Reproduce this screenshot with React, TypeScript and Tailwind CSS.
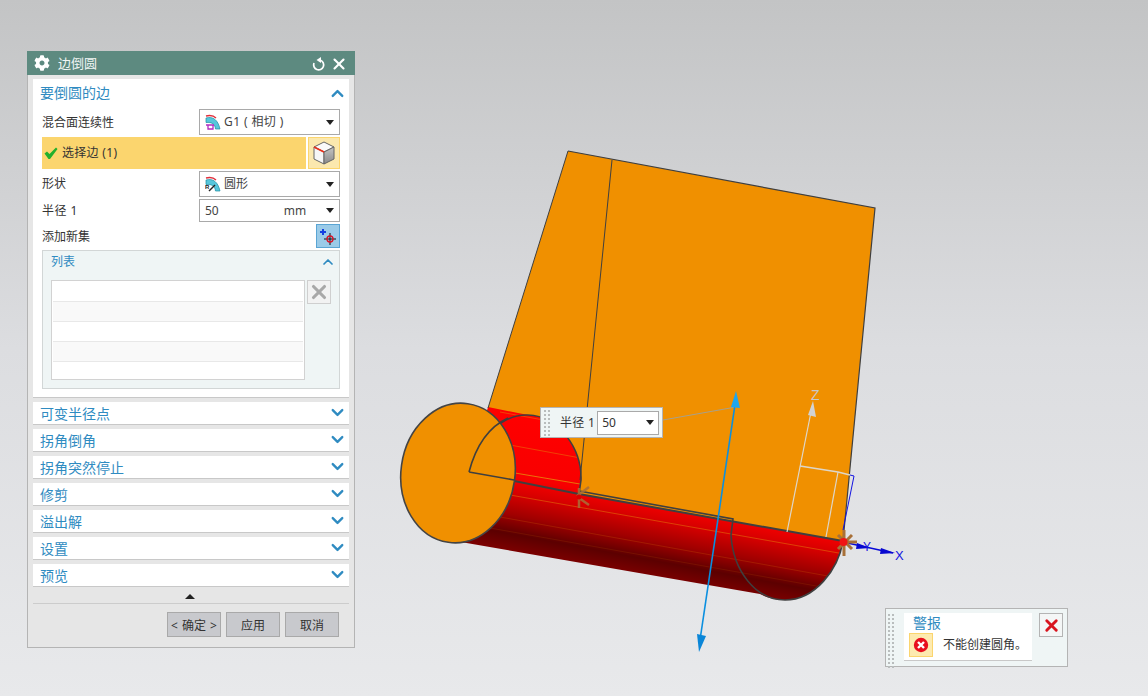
import { ChevronDown, ChevronUp, X } from "lucide-react";
import { FaCog } from "react-icons/fa";

const collapsed = ["可变半径点", "拐角倒角", "拐角突然停止", "修剪", "溢出解", "设置", "预览"];

const Grip = () => (
  <div className="grid grid-cols-2 gap-x-[2px] gap-y-[2px] w-[6px]">
    {Array.from({ length: 14 }).map((_, i) => (
      <div key={i} className="w-[2px] h-[2px] bg-[#b9bdbd]" />
    ))}
  </div>
);

const Caret = () => (
  <div className="w-0 h-0 border-l-[4px] border-r-[4px] border-t-[5px] border-l-transparent border-r-transparent border-t-[#222]" />
);

const BlendIcon = ({ round }: { round?: boolean }) => (
  <svg width="16" height="16" viewBox="0 0 16 16" className="shrink-0">
    <path d="M1 4 C8 2 13 6 15 15 L10.5 15 C10 10 7 8 1 8.5 Z" fill="#56c6dc" stroke="#1c8ca0" strokeWidth="0.7" />
    <path d="M1 2 C5 1 9 2 11 4" fill="none" stroke="#e0303c" strokeWidth="1.4" />
    {round ? (
      <>
        <text x="0" y="13" fontSize="6" fontWeight="700" fill="#222" fontFamily="Liberation Sans">R</text>
        <path d="M4 15 L10 9" stroke="#222" strokeWidth="1.4" />
      </>
    ) : (
      <path d="M1 11 H9 M3 11 V15 H8 V11" fill="none" stroke="#b02cc0" strokeWidth="1.3" />
    )}
  </svg>
);

const Select = ({ children, h }: { children: React.ReactNode; h: string }) => (
  <div className={`w-[141px] ${h} border border-[#a9a9a9] bg-white flex items-center pl-[5px] pr-[5px] text-[#333]`}>
    {children}
    <div className="ml-auto">
      <Caret />
    </div>
  </div>
);

const Model = () => (
  <svg width="1148" height="696" viewBox="0 0 1148 696" className="absolute left-0 top-0">
    <defs>
      <linearGradient id="cyl" gradientUnits="userSpaceOnUse" x1="488" y1="407" x2="463" y2="542">
        <stop offset="0" stopColor="#ff0000" />
        <stop offset="0.46" stopColor="#f80000" />
        <stop offset="0.58" stopColor="#d80000" />
        <stop offset="0.74" stopColor="#a00000" />
        <stop offset="0.88" stopColor="#5c0000" />
        <stop offset="1" stopColor="#7c0000" />
      </linearGradient>
      <clipPath id="cylClip">
        <path d="M488,407 L528,415 C560,416 582,450 581,480 L579,494 L843,541 C838,570 815,600 785,600 C775,600 768,598 760,594 L455,541 Z" />
      </clipPath>
    </defs>

    <polygon points="568,151 875,208 843,541 579,494 469,472 488,408" fill="#f09000" />
    <path d="M488,407 L528,415 C560,416 582,450 581,480 L579,494 L843,541 C838,570 815,600 785,600 C775,600 768,598 760,594 L455,541 Z" fill="url(#cyl)" />
    <g clipPath="url(#cylClip)" stroke="#e8800a" strokeOpacity="0.5" strokeWidth="1" fill="none">
      <path d="M500,412 L700,449" />
      <path d="M510,445 L700,480" />
      <path d="M515,473 L580,484" strokeOpacity="0.9" />
      <path d="M510,495 L850,555" />
      <path d="M500,517 L850,580" strokeOpacity="0.2" />
      <path d="M490,528 L850,592" strokeOpacity="0.12" />
    </g>

    <g fill="none" stroke="#3f3f3f">
      <path d="M568,151 L875,208 L843,541" strokeWidth="1.2" />
      <path d="M568,151 L488,408" strokeWidth="1" />
      <path d="M612,160 L580,480" strokeWidth="1" />
      <path d="M469,472 C478,438 502,414 528,415 C560,416 582,450 581,480 L579,494" strokeWidth="1.6" />
      <path d="M579,491 L733,519 L731,535 C733,570 755,600 785,600 C815,600 838,570 843,541" strokeWidth="1.6" />
      <path d="M469,472 L579,494 L843,541" strokeWidth="2" />
    </g>
    <ellipse cx="458" cy="473" rx="57" ry="70" transform="rotate(8 458 473)" fill="#f09000" stroke="#444" strokeWidth="1.6" />
    <path d="M469,472 C478,438 495,424 508,418 M469,472 L514,480" fill="none" stroke="#3f3f3f" strokeWidth="1.6" />

    {/* guide line and blue direction arrow */}
    <path d="M663,420 L736,407" stroke="#a8a08a" strokeWidth="1" />
    <path d="M736,398 L700,640" stroke="#0a8fe0" strokeWidth="1.6" />
    <polygon points="736,391 740,408 731,407" fill="#1ea6ee" />
    <polygon points="699,652 697,634 706,636" fill="#0a86d8" />

    {/* csys */}
    <g fill="none" stroke="#ddd6c8" strokeWidth="1.2">
      <path d="M787,532 L811,412" />
      <path d="M800,466 L838,472 L850,475" strokeWidth="1.6" />
      <path d="M838,472 L826,537" />
    </g>
    <polygon points="813,401 816,417 808,415" fill="#d2d2d2" />
    <text x="811" y="400" fontSize="14" fill="#c8c8c8" fontFamily="Liberation Sans">Z</text>
    <path d="M850,475 L854,476 L843,530" fill="none" stroke="#1414e0" strokeWidth="1" />
    <path d="M843,542 L893,553" stroke="#0808d8" strokeWidth="1.4" />
    <polygon points="895,553 880,554 881,548" fill="#0808d0" />
    <polygon points="870,548 856,549 857,543" fill="#0808d0" />
    <text x="863" y="551" fontSize="12" fill="#1414e0" fontFamily="Liberation Sans">Y</text>
    <text x="895" y="560" fontSize="13" fill="#1414e0" fontFamily="Liberation Sans">X</text>
    <g stroke="#a87038" strokeWidth="3">
      <path d="M844,530 V556 M838,535 L852,549 M838,549 L852,535 M844,542 H857" />
    </g>
    <circle cx="843.5" cy="542" r="4" fill="#f01414" />
    <g stroke="#a87038" strokeOpacity="0.85" strokeWidth="2.5">
      <path d="M579,488 V508 M577,496 L589,487 M579,498 L589,505" />
    </g>
    <circle cx="579" cy="497" r="2.5" fill="#d80000" />
  </svg>
);

export default function App() {
  return (
    <div className="relative w-[1148px] h-[696px] overflow-hidden bg-gradient-to-b from-[#c3c4c5] via-[#dcdde0] via-50% to-[#e8e9eb] font-['Noto_Sans','Noto_Sans_CJK_SC',sans-serif] text-[13px] leading-none">
      <Model />

      {/* feature dialog */}
      <div className="absolute left-[27px] top-[51px] w-[328px] bg-[#e6e6e6] border-x border-b border-[#b4b4b4] flex flex-col">
        <div className="-mx-px h-[24px] bg-[#5d8a80] text-white flex items-center pl-[7px] pr-[7px]">
          <FaCog size={16} className="shrink-0" />
          <span className="ml-[8px] text-[#f0f5f4]">边倒圆</span>
          <svg width="16" height="16" viewBox="0 0 16 16" className="ml-auto mr-[3px] mt-[2px]">
            <path d="M3 7 A5 5 0 1 0 9.5 4.2" fill="none" stroke="#fff" strokeWidth="1.7" />
            <polygon points="10,1 10,7 5.5,4" fill="#fff" />
          </svg>
          <X size={18} strokeWidth={2.8} className="mt-px shrink-0" />
        </div>

        <div className="px-[5px] pt-[4px] flex flex-col gap-[4px]">
          <div className="bg-white border-b border-[#c8c8c8] px-[9px] pb-[8px] flex flex-col gap-[2px]">
            <div className="h-[28px] flex items-center justify-between -ml-[2px] text-[#2f8bc1] text-[14px]">
              <span>要倒圆的边</span>
              <ChevronUp size={19} strokeWidth={3} className="text-[#2f8bc1] -mr-[7px]" />
            </div>

            <div className="flex items-center justify-between text-[12px] text-[#333]">
              <span className="mt-[2px]">混合面连续性</span>
              <Select h="h-[26px]">
                <BlendIcon />
                <span className="ml-[3px] text-[#444] tracking-[0.4px]">G1 ( 相切 )</span>
              </Select>
            </div>

            <div className="flex gap-[2px] h-[32px]">
              <div className="flex-1 bg-[#fbd56e] flex items-center pl-[2px] text-[12px] text-[#333]">
                <svg width="14" height="14" viewBox="0 0 14 14">
                  <path d="M0.5 7.5 L3 5.5 L5.5 8 L12 1.5 L13.5 3 L6 13 L4.5 13 Z" fill="#22b02c" />
                </svg>
                <span className="ml-[4px] tracking-[0.3px]">选择边 (1)</span>
              </div>
              <div className="w-[32px] bg-[#fbe8ae] border border-[#fbd56e] flex items-center justify-center">
                <svg width="22" height="24" viewBox="0 0 22 24">
                  <defs>
                    <linearGradient id="cubeSide" x1="0" y1="0" x2="0" y2="1">
                      <stop offset="0" stopColor="#c4c4c4" />
                      <stop offset="1" stopColor="#8a8a8a" />
                    </linearGradient>
                  </defs>
                  <polygon points="1,6 11,1 21,6 11,11" fill="#fafafa" stroke="#666" strokeWidth="1" />
                  <polygon points="1,6 11,11 11,23 1,18" fill="#f6f6f6" stroke="#666" strokeWidth="1" />
                  <polygon points="21,6 11,11 11,23 21,18" fill="url(#cubeSide)" stroke="#666" strokeWidth="1" />
                  <path d="M1,6 L11,11" fill="none" stroke="#e8301c" strokeWidth="1.6" />
                </svg>
              </div>
            </div>

            <div className="flex items-center justify-between text-[12px] text-[#333]">
              <span>形状</span>
              <Select h="h-[26px]">
                <BlendIcon round />
                <span className="ml-[3px] text-[#444]">圆形</span>
              </Select>
            </div>

            <div className="flex items-center justify-between text-[12px] text-[#333]">
              <span className="tracking-[0.5px]">半径 1</span>
              <Select h="h-[23px]">
                <span className="text-[#444]">50</span>
                <span className="ml-[65px] text-[#444]">mm</span>
              </Select>
            </div>

            <div className="flex items-center justify-between h-[24px] text-[12px] text-[#333]">
              <span className="mt-[2px]">添加新集</span>
              <div className="w-[24px] h-[24px] bg-[#9bcbe8] border border-[#5aa5d4] flex items-center justify-center">
                <svg width="18" height="18" viewBox="0 0 18 18">
                  <path d="M1 5 H7 M4 2 V8" stroke="#1440e0" strokeWidth="2" />
                  <path d="M5 12 H17 M11 6 V18" stroke="#111" strokeWidth="1" />
                  <circle cx="11" cy="12" r="3" fill="none" stroke="#d81428" strokeWidth="1.4" />
                </svg>
              </div>
            </div>

            <div className="h-[139px] bg-[#eff5f5] border border-[#d2d6d6] flex flex-col pl-[8px]">
              <div className="h-[29px] flex items-center justify-between pr-[2px] text-[#2f8bc1] text-[12px]">
                <span className="mb-[8px]">列表</span>
                <ChevronUp size={16} strokeWidth={2.6} className="mb-[7px] mr-px" />
              </div>
              <div className="flex gap-[2px] items-start">
                <div className="w-[254px] h-[100px] bg-white border border-[#d2d2d2] p-px flex flex-col">
                  <div className="h-[20px] border-b border-[#e8e8e8]" />
                  <div className="h-[20px] bg-[#f9f9f9] border-b border-[#e8e8e8]" />
                  <div className="h-[20px] border-b border-[#e8e8e8]" />
                  <div className="h-[20px] bg-[#f9f9f9] border-b border-[#e8e8e8]" />
                  <div className="flex-1" />
                </div>
                <div className="w-[24px] h-[24px] bg-[#f2f2f2] border border-[#cfcfcf] flex items-center justify-center text-[#a8a8a8]">
                  <X size={22} strokeWidth={3.4} className="shrink-0" />
                </div>
              </div>
            </div>
          </div>

          {collapsed.map((t) => (
            <div
              key={t}
              className="h-[23px] bg-white border-b border-[#c8c8c8] flex items-center justify-between pl-[7px] pr-[2px] text-[#2f8bc1] text-[14px]"
            >
              <span className="mt-[2px]">{t}</span>
              <ChevronDown size={19} strokeWidth={3} className="-mt-[2px]" />
            </div>
          ))}

          <div className="-mt-[4px] h-[17px] border-b border-[#cccccc] flex items-center justify-center">
            <div className="w-0 h-0 border-l-[5px] border-r-[5px] border-b-[5px] border-l-transparent border-r-transparent border-b-[#222] -ml-[2px] mt-[3px]" />
          </div>
        </div>

        <div className="flex justify-end gap-[5px] pr-[15px] pt-[8px] pb-[10px] text-[12px] text-[#333]">
          <div className="w-[54px] h-[25px] bg-[#c8c9cd] border border-[#a9a9a9] flex items-center justify-between px-[3px] pt-[2px]">
            <span>&lt;</span>
            <span>确定</span>
            <span>&gt;</span>
          </div>
          <div className="w-[54px] h-[25px] bg-[#c8c9cd] border border-[#a9a9a9] flex items-center justify-center pt-[2px]">应用</div>
          <div className="w-[54px] h-[25px] bg-[#c8c9cd] border border-[#a9a9a9] flex items-center justify-center pt-[2px]">取消</div>
        </div>
      </div>

      {/* on-screen input */}
      <div className="absolute left-[540px] top-[407px] w-[123px] h-[31px] bg-[#eff5f5] border border-[#b4b4b4] flex items-center pl-[3px] text-[12px] text-[#333]">
        <Grip />
        <span className="ml-[10px] tracking-[0.3px]">半径 1</span>
        <div className="ml-[2px] w-[62px] h-[24px] bg-white border border-[#a9a9a9] flex items-center justify-between pl-[4px] pr-[4px]">
          <span>50</span>
          <Caret />
        </div>
      </div>

      {/* alert */}
      <div className="absolute left-[885px] top-[608px] w-[183px] h-[59px] bg-[#eff5f5] border border-[#b4b4b4] flex items-start pt-[4px] pl-[2px]">
        <div className="pt-[1px]">
          <Grip />
          <div className="mt-[2px]">
            <Grip />
          </div>
        </div>
        <div className="ml-[10px] w-[128px] h-[48px] bg-white border-b border-[#c8c8c8] pl-[5px] flex flex-col">
          <div className="h-[20px] pl-[4px] flex items-center text-[#2f8bc1] text-[14px]">警报</div>
          <div className="flex items-center">
            <div className="w-[24px] h-[24px] bg-[#fdeab0] border border-[#fbd56e] flex items-center justify-center">
              <svg width="16" height="16" viewBox="0 0 16 16">
                <circle cx="8" cy="8" r="7.2" fill="#e80f1e" />
                <path d="M5 5 L11 11 M11 5 L5 11" stroke="#fff" strokeWidth="2.4" />
              </svg>
            </div>
            <span className="ml-[10px] text-[12px] text-[#333]">不能创建圆角。</span>
          </div>
        </div>
        <div className="ml-[7px] w-[24px] h-[24px] bg-[#f4f6f6] border border-[#b4b4b4] flex items-center justify-center text-[#d8141e]">
          <X size={19} strokeWidth={3.6} className="shrink-0" />
        </div>
      </div>
    </div>
  );
}
